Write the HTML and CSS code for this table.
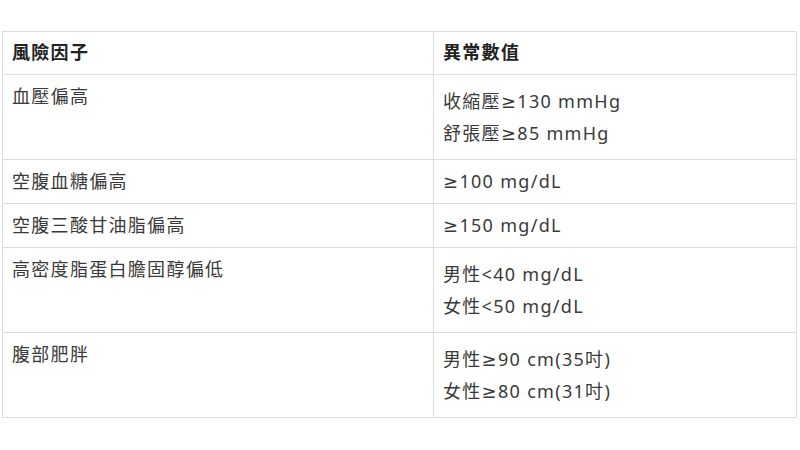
FILE: index.html
```html
<!DOCTYPE html>
<html lang="zh-Hant">
<head>
<meta charset="utf-8">
<title>代謝症候群判定標準</title>
<link rel="stylesheet" href="styles.css">
</head>
<body>
<main class="page">
  <table class="risk-table">
    <thead>
      <tr>
        <th class="col-factor">風險因子</th>
        <th class="col-value">異常數值</th>
      </tr>
    </thead>
    <tbody>
      <tr>
        <td>血壓偏高</td>
        <td><div class="line">收縮壓≥130 mmHg</div><div class="line">舒張壓≥85 mmHg</div></td>
      </tr>
      <tr>
        <td>空腹血糖偏高</td>
        <td>≥100 mg/dL</td>
      </tr>
      <tr>
        <td>空腹三酸甘油脂偏高</td>
        <td>≥150 mg/dL</td>
      </tr>
      <tr>
        <td>高密度脂蛋白膽固醇偏低</td>
        <td><div class="line">男性&lt;40 mg/dL</div><div class="line">女性&lt;50 mg/dL</div></td>
      </tr>
      <tr>
        <td>腹部肥胖</td>
        <td><div class="line">男性≥90 cm(35吋)</div><div class="line">女性≥80 cm(31吋)</div></td>
      </tr>
    </tbody>
  </table>
</main>
</body>
</html>
```

FILE: styles.css
```css
html, body {
  margin: 0;
  padding: 0;
  background: #ffffff;
}

.page {
  padding: 31px 3px 0 2px;
}

.risk-table {
  width: 795px;
  border-collapse: collapse;
  font-family: "Noto Sans", "DejaVu Sans", "Noto Sans CJK TC", sans-serif;
  font-size: 18px;
  letter-spacing: 1.3px;
  color: #3a3a3a;
}

.risk-table th,
.risk-table td {
  border: 1px solid #dddddd;
  padding: 10px 9px 10px 9px;
  line-height: 23px;
  text-align: left;
  vertical-align: top;
}

.risk-table th {
  font-weight: 700;
  color: #222222;
  padding-top: 9px;
  padding-bottom: 10px;
}

.col-factor {
  width: 412px;
}

.line {
  line-height: 32px;
}
```
